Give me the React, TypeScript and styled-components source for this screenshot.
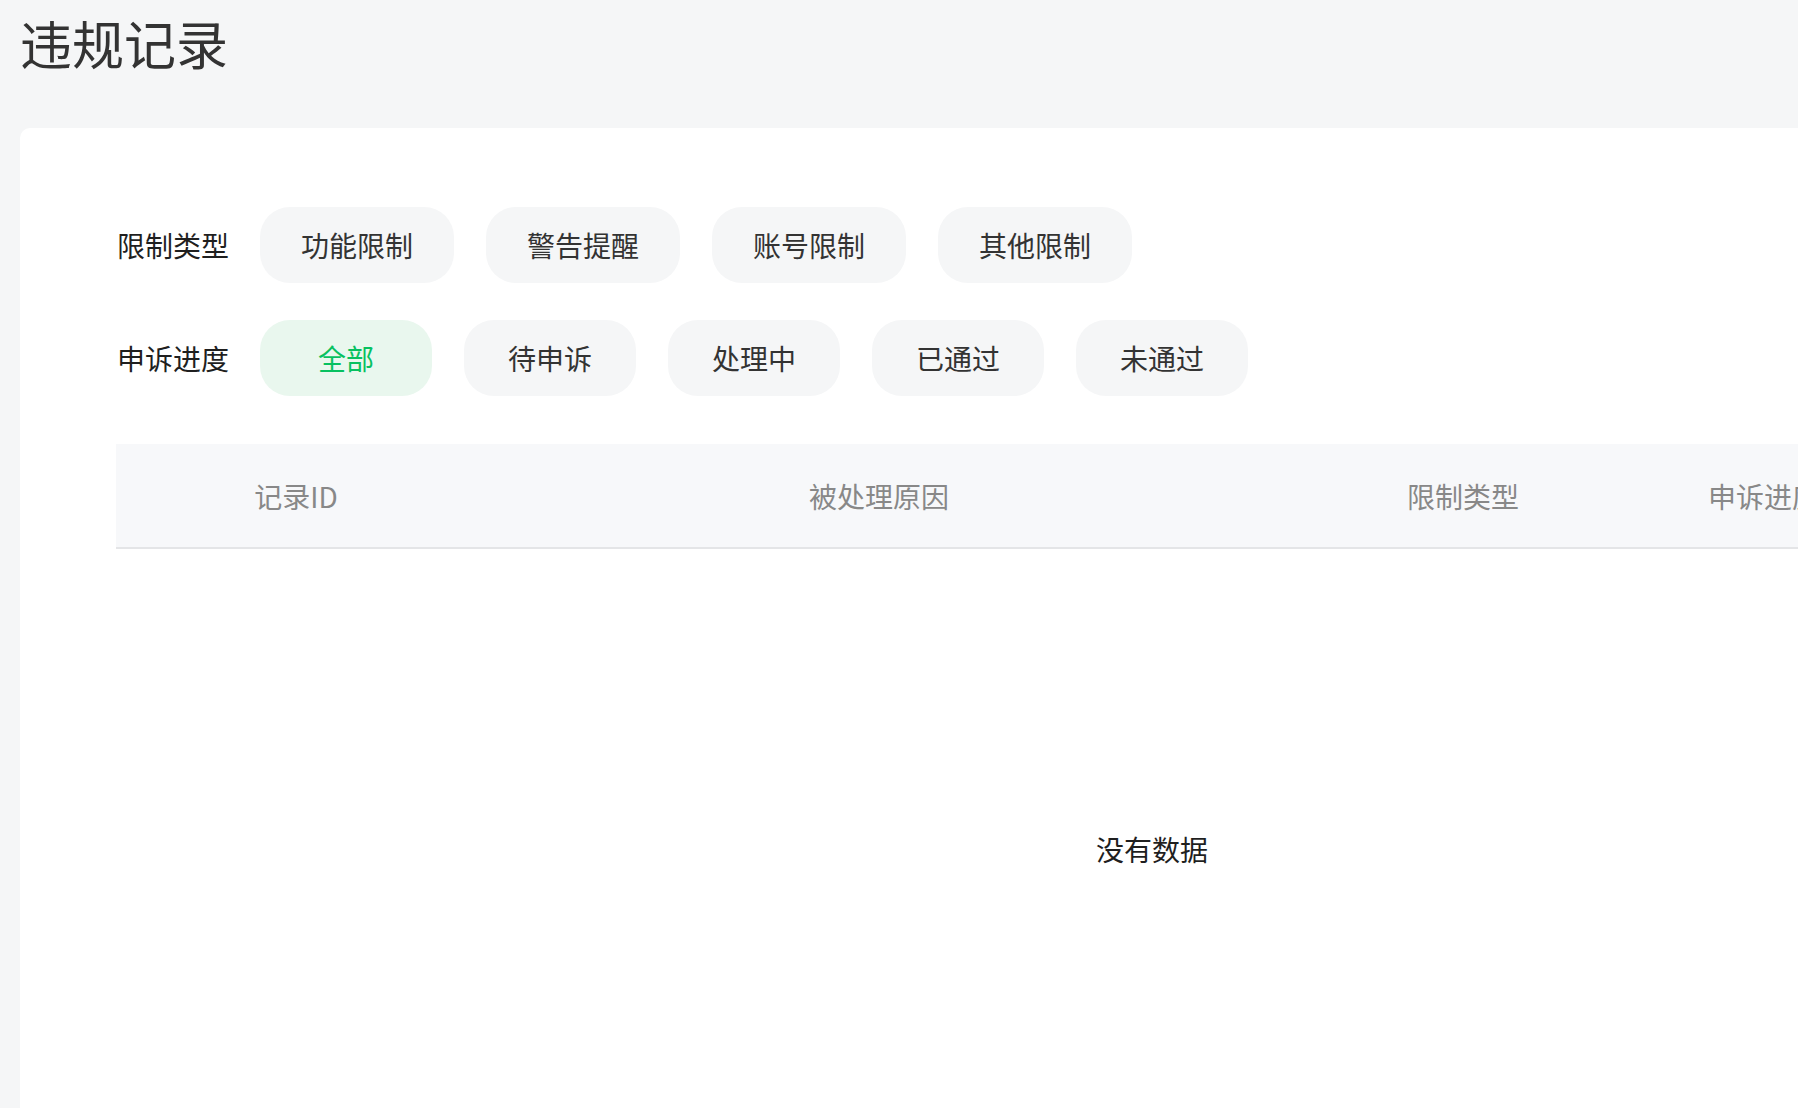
import { FC, useState } from 'react'
import styled, { createGlobalStyle } from 'styled-components'

const GlobalStyle = createGlobalStyle`
  html, body {
    margin: 0;
    padding: 0;
    overflow: hidden;
    background: #f5f6f7;
    font-family: "Noto Sans CJK SC", "Noto Sans", sans-serif;
    color: #333;
  }
`

const Page = styled.div`
  width: 2300px;
  min-height: 1108px;
  padding: 0 0 0 20px;
  box-sizing: border-box;
`

const Title = styled.h1`
  margin: 0;
  padding-top: 6px;
  height: 122px;
  font-size: 52px;
  line-height: 74px;
  font-weight: 400;
  color: #333;
`

const Card = styled.div`
  background: #fff;
  border-radius: 10px;
  padding: 79px 0 0 96px;
  min-height: 1000px;
`

const FilterRow = styled.div`
  display: flex;
  align-items: center;
  height: 76px;
  & + & {
    margin-top: 37px;
  }
`

const FilterLabel = styled.div`
  width: 143px;
  font-size: 28px;
  color: #1f1f1f;
  padding-left: 1px;
`

const Chip = styled.button<{ $active?: boolean }>`
  height: 76px;
  min-width: 172px;
  padding: 0 41px;
  margin-right: 32px;
  border: none;
  border-radius: 30px;
  font-family: inherit;
  font-size: 28px;
  cursor: pointer;
  background: ${p => (p.$active ? '#e9f7ee' : '#f5f6f7')};
  color: ${p => (p.$active ? '#07c160' : '#333')};
`

const Table = styled.div`
  margin-top: 48px;
  width: 2072px;
`

const HeadRow = styled.div`
  display: grid;
  grid-template-columns: 360px 806px 362px 240px 1fr;
  height: 103px;
  align-items: center;
  background: #f7f8fa;
  border-bottom: 2px solid #e4e5e7;
`

const HeadCell = styled.div`
  text-align: center;
  font-size: 28px;
  color: #888;
  white-space: nowrap;
`

const Empty = styled.div`
  height: 600px;
  display: flex;
  align-items: center;
  justify-content: center;
  font-size: 28px;
  color: #1f1f1f;
`

const restrictTypes = ['功能限制', '警告提醒', '账号限制', '其他限制']
const progressTypes = ['全部', '待申诉', '处理中', '已通过', '未通过']
const columns = ['记录ID', '被处理原因', '限制类型', '申诉进度', '操作']

const App: FC = () => {
  const [restrict, setRestrict] = useState<string | null>(null)
  const [progress, setProgress] = useState('全部')

  return (
    <Page>
      <GlobalStyle />
      <Title>违规记录</Title>
      <Card>
        <FilterRow>
          <FilterLabel>限制类型</FilterLabel>
          {restrictTypes.map(t => (
            <Chip key={t} $active={restrict === t} onClick={() => setRestrict(restrict === t ? null : t)}>{t}</Chip>
          ))}
        </FilterRow>
        <FilterRow>
          <FilterLabel>申诉进度</FilterLabel>
          {progressTypes.map(t => (
            <Chip key={t} $active={progress === t} onClick={() => setProgress(t)}>{t}</Chip>
          ))}
        </FilterRow>
        <Table>
          <HeadRow>
            {columns.map(c => <HeadCell key={c}>{c}</HeadCell>)}
          </HeadRow>
          <Empty>没有数据</Empty>
        </Table>
      </Card>
    </Page>
  )
}

export default App
